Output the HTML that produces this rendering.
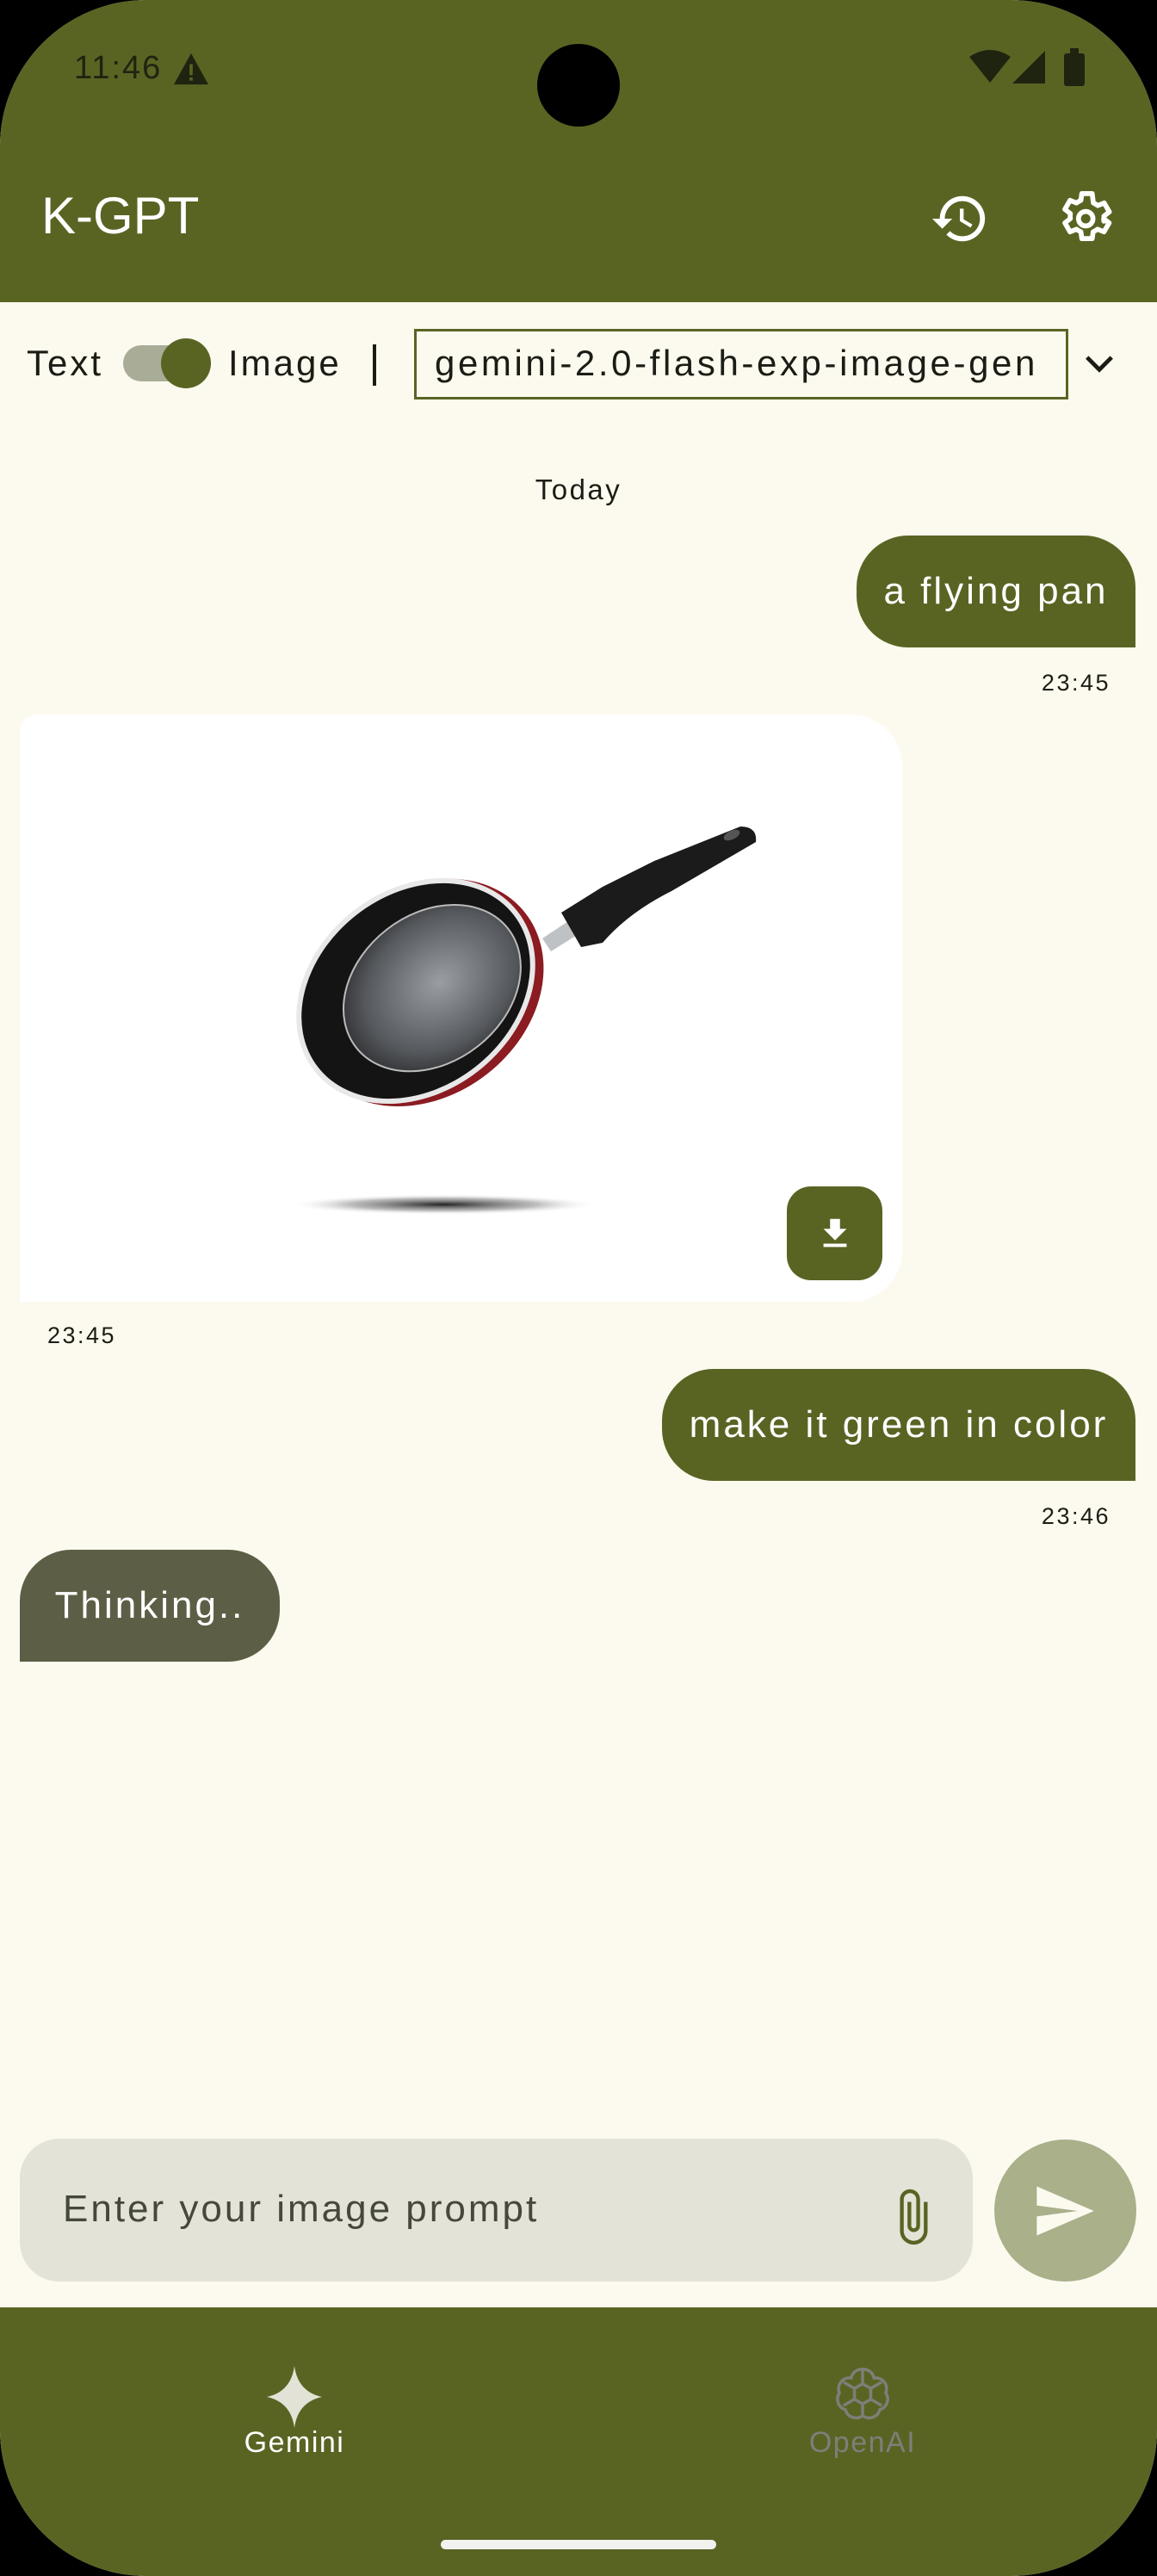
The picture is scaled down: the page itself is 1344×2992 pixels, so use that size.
<!DOCTYPE html>
<html><head><meta charset="utf-8">
<style>
*{margin:0;padding:0;box-sizing:border-box}
html,body{width:1344px;height:2992px;background:#000;overflow:hidden;font-family:"Liberation Sans",Arial,sans-serif}
#screen{position:absolute;left:0;top:0;width:1344px;height:2992px;background:#fcfaee;border-radius:170px;overflow:hidden}
.abs{position:absolute}
#hdr{left:0;top:0;width:1344px;height:351px;background:#596423}
#nav{left:0;top:2680px;width:1344px;height:312px;background:#596423}
.t{position:absolute;white-space:nowrap}
.bubble{position:absolute;background:#596423;color:#fff;font-size:44px;letter-spacing:3px;display:flex;align-items:center;justify-content:center}
.time{position:absolute;font-size:27px;color:#1c1c16;letter-spacing:2.5px}
</style></head><body>
<div id="screen">
 <div id="hdr" class="abs"></div>
 <div class="abs" style="left:624px;top:51px;width:96px;height:96px;border-radius:50%;background:#000"></div>
 <div class="t" style="left:86px;top:58px;font-size:38px;color:#1f2410;letter-spacing:2px">11:46</div>
 <svg class="abs" style="left:200px;top:60px" width="44" height="40" viewBox="0 0 24 22"><path d="M12 1L1 21h22z" fill="#1f2410"/><rect x="11" y="8" width="2" height="7" fill="#596423"/><rect x="11" y="16.5" width="2" height="2" fill="#596423"/></svg>
 <svg class="abs" style="left:1126px;top:58px" width="48" height="40" viewBox="0 0 24 20"><path d="M0 4 Q12 -4 24 4 L12 19z" fill="#1f2410"/></svg>
 <svg class="abs" style="left:1176px;top:58px" width="38" height="40" viewBox="0 0 20 20"><path d="M20 0V20H0z" fill="#1f2410"/></svg>
 <div class="abs" style="left:1236px;top:62px;width:24px;height:38px;background:#1f2410;border-radius:3px"></div>
 <div class="abs" style="left:1243px;top:56px;width:10px;height:8px;background:#1f2410"></div>

 <div class="t" style="left:48px;top:216px;font-size:60px;color:#fff">K-GPT</div>
 <svg class="abs" style="left:1080px;top:219px" width="70" height="70" viewBox="0 0 24 24"><path fill="#fff" d="M13 3a9 9 0 0 0-9 9H1l3.89 3.890.07.14L9 12H6c0-3.87 3.13-7 7-7s7 3.13 7 7-3.13 7-7 7c-1.93 0-3.68-.79-4.94-2.06l-1.42 1.42A8.954 8.954 0 0 0 13 21a9 9 0 0 0 0-18zm-1 5v5l4.28 2.54.72-1.21-3.5-2.08V8H12z"/></svg>
 <svg class="abs" style="left:1224px;top:218px" width="72" height="72" viewBox="0 0 24 24"><path fill="none" stroke="#fff" stroke-width="1.9" stroke-linejoin="round" d="M19.43 12.98c.04-.32.07-.64.07-.98 0-.34-.03-.66-.07-.98l2.11-1.65-2-3.46-2.49 1c-.52-.4-1.08-.73-1.690-.98L14.9 2.28h-4l-.38 2.65c-.61.25-1.170.59-1.690.98l-2.49-1-2 3.46 2.11 1.65c-.04.32-.07.65-.07.98 0 .33.03.66.07.98l-2.11 1.65 2 3.46 2.49-1c.52.4 1.08.73 1.69.98l.38 2.65h4l.38-2.65c.61-.25 1.17-.59 1.69-.98l2.49 1 2-3.46-2.11-1.65z"/><circle cx="12.4" cy="12" r="2.8" fill="none" stroke="#fff" stroke-width="1.9"/></svg>

 <!-- toolbar -->
 <div class="t" style="left:31px;top:398px;font-size:42px;color:#1c1c16;letter-spacing:3px">Text</div>
 <div class="abs" style="left:143px;top:401px;width:100px;height:42px;border-radius:21px;background:#a9ad97"></div>
 <div class="abs" style="left:187px;top:393px;width:58px;height:58px;border-radius:50%;background:#596423"></div>
 <div class="t" style="left:265px;top:398px;font-size:42px;color:#1c1c16;letter-spacing:3px">Image</div>
 <div class="abs" style="left:433px;top:400px;width:4px;height:48px;background:#1c1c16"></div>
 <div class="abs" style="left:481px;top:382px;width:760px;height:82px;border:3px solid #596423"></div>
 <div class="t" style="left:505px;top:398px;font-size:42px;color:#1c1c16;letter-spacing:3.6px">gemini-2.0-flash-exp-image-gen</div>
 <svg class="abs" style="left:1258px;top:408px" width="38" height="30" viewBox="0 0 24 16"><path d="M3 3l9 9 9-9" fill="none" stroke="#1c1c16" stroke-width="3"/></svg>

 <div class="t" style="left:0;width:1344px;text-align:center;top:550px;font-size:33px;color:#1c1c16;letter-spacing:2.5px">Today</div>

 <div class="bubble" style="left:995px;top:622px;width:324px;height:130px;border-radius:60px 60px 0 60px">a flying pan</div>
 <div class="time" style="right:54px;top:778px">23:45</div>

 <!-- image card -->
 <div class="abs" style="left:23px;top:830px;width:1025px;height:682px;background:#fff;border-radius:20px 60px 60px 0;overflow:hidden">
  <svg width="1025" height="682" viewBox="23 830 1025 682">
   <defs>
    <radialGradient id="sh" cx="50%" cy="50%" r="50%"><stop offset="0" stop-color="#222"/><stop offset="0.6" stop-color="#777" stop-opacity=".5"/><stop offset="1" stop-color="#fff" stop-opacity="0"/></radialGradient>
    <radialGradient id="in" cx="55%" cy="50%" r="60%"><stop offset="0" stop-color="#9a9ea3"/><stop offset="0.7" stop-color="#55585c"/><stop offset="1" stop-color="#2a2b2d"/></radialGradient>
   </defs>
   <ellipse cx="515" cy="1399" rx="180" ry="12" fill="url(#sh)"/>
   <g transform="rotate(-38 483 1151)">
    <ellipse cx="489" cy="1158" rx="150" ry="120" fill="#8b1c22"/>
    <ellipse cx="483" cy="1151" rx="150" ry="118" fill="#e8e8e8"/>
    <ellipse cx="483" cy="1151" rx="144" ry="112" fill="#141414"/>
    <ellipse cx="500" cy="1160" rx="112" ry="86" fill="url(#in)" stroke="#bbb" stroke-width="2"/>
   </g>
   <path d="M630 1090 L660 1070 L672 1085 L640 1105z" fill="#bfc2c5"/>
   <path d="M652 1060 L700 1030 L760 1000 L860 960 Q880 960 878 978 L780 1035 Q730 1060 700 1095 L675 1100z" fill="#1b1b1b"/>
   <ellipse cx="850" cy="970" rx="10" ry="5" fill="#555" transform="rotate(-25 850 970)"/>
  </svg>
 </div>
 <div class="abs" style="left:914px;top:1378px;width:111px;height:109px;border-radius:28px;background:#596423"></div>
 <svg class="abs" style="left:947px;top:1410px" width="46" height="46" viewBox="0 0 24 24"><path fill="#fff" d="M5 20h14v-2H5v2zM19 9h-4V3H9v6H5l7 7 7-7z"/></svg>
 <div class="time" style="left:55px;top:1536px">23:45</div>

 <div class="bubble" style="left:769px;top:1590px;width:550px;height:130px;border-radius:60px 60px 0 60px">make it green in color</div>
 <div class="time" style="right:54px;top:1746px">23:46</div>

 <div class="bubble" style="left:23px;top:1800px;width:302px;height:130px;border-radius:60px 60px 60px 0;background:#5c5f45">Thinking..</div>

 <!-- input -->
 <div class="abs" style="left:23px;top:2484px;width:1107px;height:166px;border-radius:46px;background:#e3e3d7"></div>
 <div class="t" style="left:73px;top:2541px;font-size:44px;color:#46473d;letter-spacing:3px">Enter your image prompt</div>
 <svg class="abs" style="left:1025px;top:2540px" width="70" height="70" viewBox="0 0 24 24"><path fill="#596423" d="M16.5 6v11.5c0 2.21-1.79 4-4 4s-4-1.79-4-4V5a2.5 2.5 0 0 1 5 0v10.5c0 .55-.45 1-1 1s-1-.45-1-1V6H10v9.5a2.5 2.5 0 0 0 5 0V5c0-2.21-1.79-4-4-4S7 2.79 7 5v12.5c0 3.04 2.46 5.5 5.5 5.5s5.5-2.46 5.5-5.5V6h-1.5z"/></svg>
 <div class="abs" style="left:1155px;top:2485px;width:165px;height:165px;border-radius:50%;background:#a9b08a"></div>
 <svg class="abs" style="left:1198px;top:2530px" width="76" height="76" viewBox="0 0 24 24"><path fill="#fcfaee" d="M2.01 21L23 12 2.01 3 2 10l15 2-15 2z"/></svg>

 <!-- nav -->
 <div id="nav" class="abs"></div>
 <svg class="abs" style="left:310px;top:2748px" width="64" height="72" viewBox="0 0 64 72"><path d="M32 0 Q36 30 64 36 Q36 42 32 72 Q28 42 0 36 Q28 30 32 0z" fill="#e2e3d6"/></svg>
 <div class="t" style="left:272px;top:2818px;width:140px;text-align:center;font-size:34px;color:#fff;letter-spacing:1.5px">Gemini</div>
 <svg class="abs" style="left:964px;top:2744px" width="76" height="76" viewBox="0 0 24 24"><path fill="none" stroke="#7d7f79" stroke-width="1.1" d="M12 2.5a4 4 0 0 1 4.2 3.2 4 4 0 0 1 4.3 5.5 4 4 0 0 1-2.2 6.1 4 4 0 0 1-6.3 2.2 4 4 0 0 1-6.3-2.2 4 4 0 0 1-2.2-6.1A4 4 0 0 1 7.8 5.7 4 4 0 0 1 12 2.5zM9 9.5l3-1.7 3 1.7v4l-3 1.7-3-1.7z M12 7.8V3 M15 9.5l4-2.300 M15 13.5l4 2.3 M12 15.2V20 M9 13.5l-4 2.3 M9 9.5L5 7.2"/></svg>
 <div class="t" style="left:912px;top:2818px;width:180px;text-align:center;font-size:34px;color:#7d7f79;letter-spacing:1.5px">OpenAI</div>
 <div class="abs" style="left:512px;top:2950px;width:320px;height:11px;border-radius:6px;background:#f2f2ee"></div>
</div>
</body></html>
